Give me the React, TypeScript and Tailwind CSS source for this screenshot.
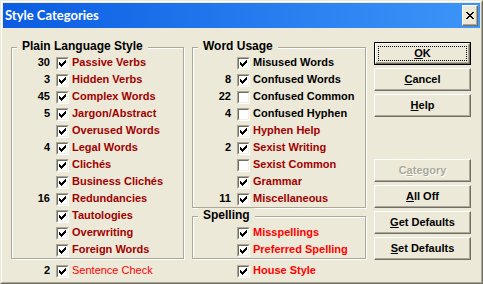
import React from 'react';
import clsx from 'clsx';

const DARK = 'text-[#a00000]';
const RED = 'text-[#ff0000]';
const BLACK = 'text-black';

type Item = { n: string; label: string; checked: boolean; color: string; bold?: boolean };

const PLAIN: Item[] = [
  { n: '30', label: 'Passive Verbs', checked: true, color: DARK },
  { n: '3', label: 'Hidden Verbs', checked: true, color: DARK },
  { n: '45', label: 'Complex Words', checked: true, color: DARK },
  { n: '5', label: 'Jargon/Abstract', checked: true, color: DARK },
  { n: '', label: 'Overused Words', checked: true, color: DARK },
  { n: '4', label: 'Legal Words', checked: true, color: DARK },
  { n: '', label: 'Clichés', checked: true, color: DARK },
  { n: '', label: 'Business Clichés', checked: true, color: DARK },
  { n: '16', label: 'Redundancies', checked: true, color: DARK },
  { n: '', label: 'Tautologies', checked: true, color: DARK },
  { n: '', label: 'Overwriting', checked: true, color: DARK },
  { n: '', label: 'Foreign Words', checked: true, color: DARK },
];

const WORDS: Item[] = [
  { n: '', label: 'Misused Words', checked: true, color: BLACK },
  { n: '8', label: 'Confused Words', checked: true, color: BLACK },
  { n: '22', label: 'Confused Common', checked: false, color: BLACK },
  { n: '4', label: 'Confused Hyphen', checked: false, color: BLACK },
  { n: '', label: 'Hyphen Help', checked: true, color: DARK },
  { n: '2', label: 'Sexist Writing', checked: true, color: DARK },
  { n: '', label: 'Sexist Common', checked: false, color: DARK },
  { n: '', label: 'Grammar', checked: true, color: DARK },
  { n: '11', label: 'Miscellaneous', checked: true, color: DARK },
];

const SPELLING: Item[] = [
  { n: '', label: 'Misspellings', checked: true, color: RED },
  { n: '', label: 'Preferred Spelling', checked: true, color: RED },
];

// little bitmap glyphs (check mark, close X)
const Pixels = ({ rows, className }: { rows: string[]; className?: string }) => {
  let d = '';
  rows.forEach((row, y) =>
    row.split('').forEach((c, x) => {
      if (c === 'X') d += `M${x} ${y}h1v1h-1z`;
    }),
  );
  return (
    <svg
      width={rows[0].length}
      height={rows.length}
      viewBox={`0 0 ${rows[0].length} ${rows.length}`}
      shapeRendering="crispEdges"
      className={className}
    >
      <path d={d} fill="#000" />
    </svg>
  );
};

const CHECK = ['......X', '.....XX', 'X...XXX', 'XX.XXX.', 'XXXXX..', '.XXX...', '..X....'];
const CLOSE = ['XX....XX', '.XX..XX.', '..XXXX..', '...XX...', '..XXXX..', '.XX..XX.', 'XX....XX'];

const CheckBox = ({ checked }: { checked: boolean }) => (
  <span className="ml-[6px] mt-[3px] flex h-[13px] w-[13px] shrink-0 self-start border border-t-[#aca899] border-l-[#aca899] border-r-white border-b-white">
    <span className="flex flex-1 items-center justify-center border border-t-[#716f64] border-l-[#716f64] border-r-[#f1efe2] border-b-[#f1efe2] bg-white">
      {checked && <Pixels rows={CHECK} />}
    </span>
  </span>
);

const Row = ({ item, numWidth = 'w-[38px]' }: { item: Item; numWidth?: string }) => (
  <div className="flex h-[17px] items-center">
    <span className={clsx(numWidth, 'shrink-0 text-right text-[11px] font-bold leading-none text-black')}>{item.n}</span>
    <CheckBox checked={item.checked} />
    <span
      className={clsx(
        'ml-[3px] whitespace-nowrap text-[11px] leading-none',
        item.color,
        item.bold === false ? 'font-normal' : 'font-bold',
      )}
    >
      {item.label}
    </span>
  </div>
);

const Group = ({ title, className, children }: { title: string; className?: string; children: React.ReactNode }) => (
  <div
    className={clsx(
      'relative border border-[#aca899] shadow-[inset_1px_1px_0_#fff,1px_1px_0_#fff]',
      className,
    )}
  >
    <span className="absolute left-[5px] top-[-9px] bg-[#ece9d8] px-[5px] text-[12px] font-bold leading-[15px] text-black">
      {title}
    </span>
    {children}
  </div>
);

type BtnProps = { pre?: string; u: string; post?: string; isDefault?: boolean; disabled?: boolean };

const Button = ({ pre, u, post, isDefault, disabled }: BtnProps) => {
  const text = (
    <span
      className={clsx(
        'text-[11px] font-bold leading-none',
        disabled ? 'text-[#aca899] [text-shadow:1px_1px_0_#fff]' : 'text-black',
      )}
    >
      {pre}
      <span className="underline">{u}</span>
      {post}
    </span>
  );
  const bevel = 'border border-t-white border-l-white border-r-[#716f64] border-b-[#716f64] shadow-[inset_-1px_-1px_0_#aca899]';
  if (isDefault) {
    return (
      <div className="flex h-[23px] w-[97px] border border-black">
        <div className={clsx('flex flex-1', bevel)}>
          <div className="m-[2px] flex flex-1 items-center justify-center border border-dotted border-black">{text}</div>
        </div>
      </div>
    );
  }
  return <div className={clsx('flex h-[23px] w-[97px] items-center justify-center', bevel)}>{text}</div>;
};

export default function App() {
  return (
    <div className="h-[284px] w-[483px] border border-t-[#ece9d8] border-l-[#ece9d8] border-r-[#716f64] border-b-[#716f64] bg-[#ece9d8] font-['Liberation_Sans',Arial,sans-serif]">
      <div className="flex h-full flex-col border border-t-white border-l-white border-r-[#aca899] border-b-[#aca899] p-px">
        {/* title bar */}
        <div className="flex h-[25px] shrink-0 items-center justify-between bg-linear-to-r from-[#0b5ce2] to-[#3d95f8] pl-[2px] pr-[2px]">
          <span className="font-['Lato','Liberation_Sans',sans-serif] text-[13px] font-bold text-white">Style Categories</span>
          <div className="flex h-[21px] w-[16px] items-center justify-center border border-t-white border-l-white border-r-[#716f64] border-b-[#716f64] bg-[#ece9d8] shadow-[inset_-1px_-1px_0_#aca899]">
            <Pixels rows={CLOSE} />
          </div>
        </div>

        {/* body */}
        <div className="flex flex-1 pl-[8px]">
          <div className="mt-[19px] flex w-[173px] flex-col">
            <Group title="Plain Language Style" className="pt-[6px]">
              {PLAIN.map((it) => (
                <Row key={it.label} item={it} />
              ))}
            </Group>
            <div className="mt-[3px] pl-px">
              <Row item={{ n: '2', label: 'Sentence Check', checked: true, color: RED, bold: false }} />
            </div>
          </div>

          <div className="ml-[8px] mt-[19px] flex w-[174px] flex-col">
            <Group title="Word Usage" className="pt-[6px]">
              {WORDS.map((it) => (
                <Row key={it.label} item={it} />
              ))}
            </Group>
            <Group title="Spelling" className="mt-[8px] pt-[7px]">
              {SPELLING.map((it) => (
                <Row key={it.label} item={it} />
              ))}
            </Group>
            <div className="mt-[3px] pl-px">
              <Row item={{ n: '', label: 'House Style', checked: true, color: RED }} />
            </div>
          </div>

          <div className="ml-[8px] mt-[14px] flex flex-col gap-[3px]">
            <Button u="O" post="K" isDefault />
            <Button u="C" post="ancel" />
            <Button u="H" post="elp" />
            <div className="mt-[39px] flex flex-col gap-[3px]">
              <Button pre="C" u="a" post="tegory" disabled />
              <Button u="A" post="ll Off" />
              <Button u="G" post="et Defaults" />
              <Button u="S" post="et Defaults" />
            </div>
          </div>
        </div>
      </div>
    </div>
  );
}
